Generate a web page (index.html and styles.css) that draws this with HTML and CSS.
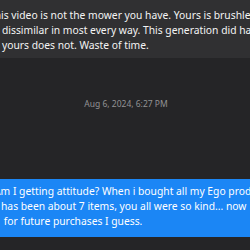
FILE: index.html
```html
<!DOCTYPE html>
<html>
<head>
<meta charset="utf-8">
<link rel="stylesheet" href="styles.css">
</head>
<body>
<div class="thread">
  <div class="bubble incoming">
    <div class="line first">This video is not the mower you have. Yours is brushless</div>
    <div class="line">dissimilar in most every way. This generation did has</div>
    <div class="line">yours does not. Waste of time.</div>
  </div>
  <div class="stamp">Aug 6, 2024, 6:27 PM</div>
  <div class="bubble outgoing">
    <div class="line first-out">Am I getting attitude? When i bought all my Ego products</div>
    <div class="line">has been about 7 items, you all were so kind... now</div>
    <div class="line">&nbsp;for future purchases I guess.</div>
  </div>
</div>
</body>
</html>
```

FILE: styles.css
```css
html, body {
  margin: 0;
  padding: 0;
  width: 250px;
  height: 250px;
  overflow: hidden;
  background: #252527;
}
.thread {
  display: flex;
  flex-direction: column;
  font-family: "Noto Sans", "Open Sans", sans-serif;
  font-size: 10.3px;
  line-height: 15px;
  color: #f4f4f4;
}
.bubble {
  white-space: nowrap;
  overflow: hidden;
}
.incoming {
  background: #303032;
  padding: 8px 0 5px 2px;
}
.first {
  margin-left: -13px;
}
.stamp {
  margin-top: 39px;
  text-align: center;
  font-size: 8.5px;
  line-height: 13px;
  color: #929294;
  padding-left: 2px;
}
.outgoing {
  margin-top: 69px;
  background: #1b86f5;
  color: #ffffff;
  padding: 5px 0 8px 1px;
}
.first-out {
  margin-left: -7px;
}
```
